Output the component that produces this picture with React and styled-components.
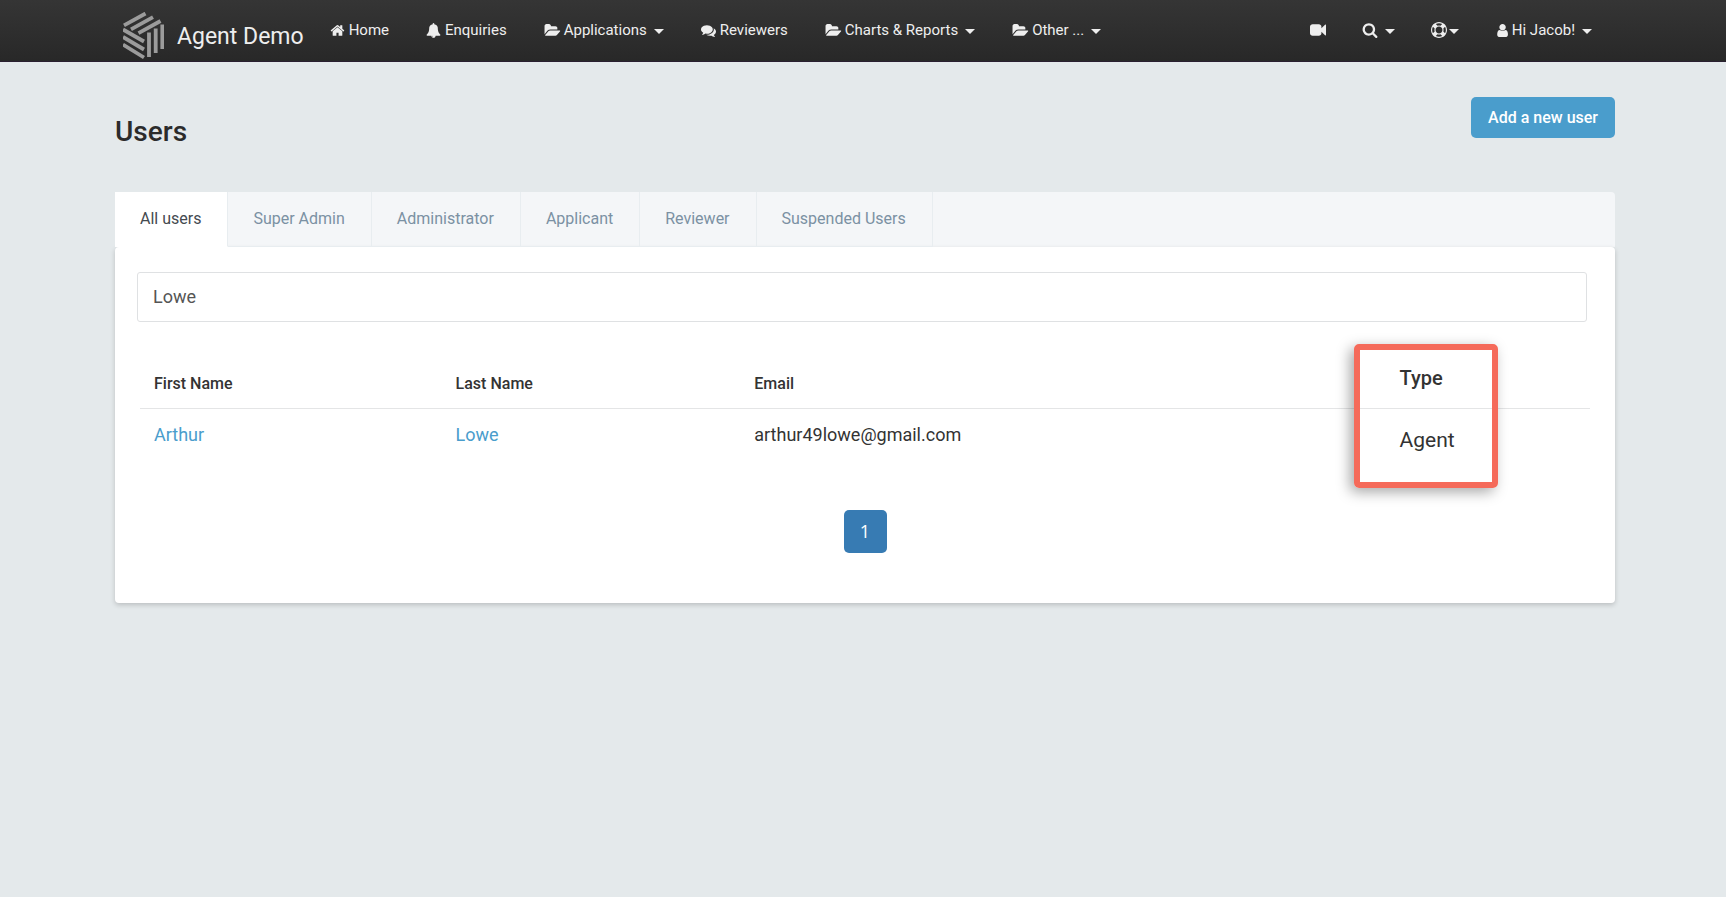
import React from "react";
import styled, { createGlobalStyle } from "styled-components";

const GlobalStyle = createGlobalStyle`
  *, *::before, *::after { box-sizing: border-box; }
  body {
    margin: 0;
    background: #e4e9eb;
    color: #333;
    font-family: Roboto, "Liberation Sans", sans-serif;
    font-size: 16px;
    line-height: 24px;
  }
`;

const ICONS = {
  home: [1792, "M1472 992v480q0 26-19 45t-45 19h-384v-384h-256v384h-384q-26 0-45-19t-19-45v-480q0-1 .5-3t.5-3l575-474 575 474q1 2 1 6zm223-69l-62 74q-8 9-21 11h-3q-13 0-21-7l-692-577-692 577q-12 8-24 7-13-2-21-11l-62-74q-8-10-7-23.5t11-21.5l719-599q32-26 76-26t76 26l244 204v-195q0-14 9-23t23-9h192q14 0 23 9t9 23v408l219 182q10 8 11 21.5t-7 23.5z"],
  bell: [1792, "M912 1696q0-16-16-16-59 0-101.5-42.5t-42.5-101.5q0-16-16-16t-16 16q0 73 51.5 124.5t124.5 51.5q16 0 16-16zm816-288q0 52-38 90t-90 38h-448q0 106-75 181t-181 75-181-75-75-181h-448q-52 0-90-38t-38-90q50-42 91-88t85-119.5 74.5-158.5 50-206 19.5-260q0-152 117-282.5t307-158.5q-8-19-8-39 0-40 28-68t68-28 68 28 28 68q0 20-8 39 190 28 307 158.5t117 282.5q0 139 19.5 260t50 206 74.5 158.5 85 119.5 91 88z"],
  folder: [1920, "M1943 952q0 31-31 66l-336 396q-43 51-120.5 86.5t-143.5 35.5h-1088q-34 0-60.5-13t-26.5-43q0-31 31-66l336-396q43-51 120.5-86.5t143.5-35.5h1088q34 0 60.5 13t26.5 43zm-343-344v160h-832q-94 0-197 47.5t-164 119.5l-337 396-5 6q0-4-.5-12.5t-.5-12.5v-960q0-92 66-158t158-66h320q92 0 158 66t66 158v32h544q92 0 158 66t66 158z"],
  comments: [1792, "M1408 768q0 139-94 257t-256.5 186.5-353.5 68.5q-86 0-176-16-124 88-278 128-36 9-86 16h-3q-11 0-20.5-8t-11.5-21q-1-3-1-6.5t.5-6.5 2-6l2.5-5 3.5-5.5 4-5 4.5-5 4-4.5q5-6 23-25t26-29.5 22.5-29 25-38.5 20.5-44q-124-72-195-177t-71-224q0-139 94-257t256.5-186.5 353.5-68.5 353.5 68.5 256.5 186.5 94 257zm384 256q0 120-71 224.5t-195 176.5q10 24 20.5 44t25 38.5 22.5 29 26 29.5 23 25q1 1 4 4.5t4.5 5 4 5 3.5 5.5l2.5 5 2 6 .5 6.5-1 6.5q-3 14-13 22t-22 7q-50-7-86-16-154-40-278-128-90 16-176 16-271 0-472-132 58 4 88 4 161 0 309-45t264-129q125-92 192-212t67-254q0-77-23-152 129 71 204 178t75 230z"],
  video: [1792, "M1792 352v1088q0 42-39 59-13 5-25 5-27 0-45-19l-403-403v166q0 119-84.5 203.5t-203.5 84.5h-704q-119 0-203.5-84.5t-84.5-203.5v-704q0-119 84.5-203.5t203.5-84.5h704q119 0 203.5 84.5t84.5 203.5v165l403-402q18-19 45-19 12 0 25 5 39 17 39 59z"],
  search: [1792, "M1216 832q0-185-131.5-316.5t-316.5-131.5-316.5 131.5-131.5 316.5 131.5 316.5 316.5 131.5 316.5-131.5 131.5-316.5zm512 832q0 52-38 90t-90 38q-54 0-90-38l-343-342q-179 124-399 124-143 0-273.5-55.5t-225-150-150-225-55.5-273.5 55.5-273.5 150-225 225-150 273.5-55.5 273.5 55.5 225 150 150 225 55.5 273.5q0 220-124 399l343 343q37 37 37 90z"],
  ring: [1792, "M896 0q182 0 348 71t286 191 191 286 71 348-71 348-191 286-286 191-348 71-348-71-286-191-191-286-71-348 71-348 191-286 286-191 348-71zm0 128q-190 0-361 90l194 194q82-28 167-28t167 28l194-194q-171-90-361-90zm-678 1129l194-194q-28-82-28-167t28-167l-194-194q-90 171-90 361t90 361zm678 407q190 0 361-90l-194-194q-82 28-167 28t-167-28l-194 194q171 90 361 90zm0-384q159 0 271.5-112.5t112.5-271.5-112.5-271.5-271.5-112.5-271.5 112.5-112.5 271.5 112.5 271.5 271.5 112.5zm484-217l194 194q90-171 90-361t-90-361l-194 194q28 82 28 167t-28 167z"],
  user: [1536, "M1536 1399q0 109-62.5 187t-150.5 78h-854q-88 0-150.5-78t-62.5-187q0-85 8.5-160.5t31.5-152 58.5-131 94-89 134.5-34.5q131 128 313 128t313-128q76 0 134.5 34.5t94 89 58.5 131 31.5 152 8.5 160.5zm-256-887q0 159-112.5 271.5t-271.5 112.5-271.5-112.5-112.5-271.5 112.5-271.5 271.5-112.5 271.5 112.5 112.5 271.5z"],
};

const IconSvg = styled.svg`
  display: block;
  flex: none;
  fill: currentColor;
  overflow: visible;
`;

function Icon({ name, size = 15 }) {
  const [w, d] = ICONS[name];
  return (
    <IconSvg width={Math.round((size * w) / 1792)} height={size} viewBox={`0 0 ${w} 1792`} aria-hidden="true">
      <path d={d} />
    </IconSvg>
  );
}

const Header = styled.header`
  display: flex;
  align-items: flex-start;
  height: 62px;
  padding: 0 134px 0 123px;
  background: linear-gradient(#353535, #282828);
  border-bottom: 1px solid #2a2030;
  color: #eee;
`;

const Brand = styled.a`
  display: flex;
  gap: 13px;
  padding-top: 12px;
  margin-right: 26px;
  color: inherit;
  font-size: 23px;
  line-height: 50px;
  text-decoration: none;
  white-space: nowrap;
`;

const Nav = styled.nav`
  display: flex;
  flex: ${(p) => (p.$grow ? 1 : "none")};
  gap: ${(p) => (p.$grow ? 37 : 36)}px;
  padding-top: 18px;
`;

const navItem = `
  display: flex;
  align-items: center;
  gap: 4px;
  padding: 0;
  border: 0;
  background: none;
  color: inherit;
  font-family: inherit;
  font-size: 15px;
  line-height: 24px;
  font-weight: 400;
  text-decoration: none;
  white-space: nowrap;
  cursor: pointer;
`;
const NavLink = styled.a`${navItem}`;
const NavButton = styled.button`${navItem}`;

const Caret = styled.span`
  margin: 3px 0 0 ${(p) => (p.$tight ? -2 : 3)}px;
  border: 5px solid transparent;
  border-top-color: currentColor;
  border-bottom: 0;
`;

const Main = styled.main`
  padding: 35px 111px 40px 115px;
`;

const TitleRow = styled.div`
  display: flex;
  justify-content: space-between;
  align-items: flex-start;
  margin-bottom: 42px;
`;

const Title = styled.h1`
  margin: 17px 0 0;
  color: #2b2b2b;
  font-size: 28px;
  line-height: 36px;
  font-weight: 500;
`;

const AddButton = styled.button`
  height: 41px;
  padding: 0 17px;
  border: 0;
  border-radius: 5px;
  background: #4a9dcc;
  color: #fff;
  font-family: inherit;
  font-size: 16px;
  font-weight: 500;
  cursor: pointer;
`;

const Tabs = styled.div`
  display: flex;
  background: #f4f6f8;
  border-radius: 0 4px 0 0;
`;

const Tab = styled.button`
  height: 55px;
  padding: 0 26px 2px 25px;
  border: 0;
  border-right: 1px solid #e8edf0;
  border-bottom: 1px solid ${(p) => (p.$active ? "#fff" : "#e8edf0")};
  background: ${(p) => (p.$active ? "#fff" : "transparent")};
  color: ${(p) => (p.$active ? "#444a50" : "#7b91a3")};
  font-family: inherit;
  font-size: 16px;
  cursor: pointer;
`;

const Card = styled.section`
  padding: 25px 25px 50px;
  border-radius: 4px;
  background: #fff;
  box-shadow: 0 2px 5px rgba(0, 0, 0, 0.18);
`;

const SearchForm = styled.form`
  margin: 0 3px 34px -3px;
`;

const SearchInput = styled.input`
  display: block;
  width: 100%;
  height: 50px;
  padding: 0 15px 2px;
  border: 1px solid #dfe1e3;
  border-radius: 3px;
  background: #fff;
  color: #555;
  font-family: inherit;
  font-size: 18px;
  outline: 0;
`;

const Table = styled.table`
  width: 100%;
  table-layout: fixed;
  border-collapse: collapse;
  text-align: left;
`;

const Col = styled.col`
  width: ${(p) => p.$width};
`;

const Th = styled.th`
  position: relative;
  height: 52px;
  padding: ${(p) => (p.$featured ? "0 14px 7px" : "4px 14px 0")};
  border-bottom: 1px solid #e4e5e6;
  font-size: ${(p) => (p.$featured ? 20 : 16)}px;
  font-weight: 500;
`;

const Td = styled.td`
  height: 52px;
  padding: ${(p) => (p.$featured ? "12px 14px 0" : "2px 14px 0")};
  font-size: ${(p) => (p.$featured ? 21 : 18)}px;
`;

const RowLink = styled.a`
  color: #4a9dcc;
  text-decoration: none;
`;

const Highlight = styled.span`
  position: absolute;
  top: -12px;
  left: -32px;
  width: 144px;
  height: 144px;
  border: 6px solid #f56a5a;
  border-radius: 5px;
  box-shadow: -4px 4px 14px rgba(0, 0, 0, 0.35);
  pointer-events: none;
`;

const Pagination = styled.nav`
  display: flex;
  justify-content: center;
  margin-top: 50px;
`;

const PageLink = styled.a`
  width: 43px;
  border-radius: 5px;
  background: #377bb3;
  color: #fff;
  font-family: "Open Sans", sans-serif;
  font-size: 18px;
  line-height: 43px;
  text-align: center;
  text-decoration: none;
`;

function Logo() {
  return (
    <svg width="41" height="48" viewBox="0 0 41 48" aria-hidden="true">
      <g stroke="#9b9b9b" strokeWidth="3.8" fill="none">
        <path d="M1 13.4 22.5 1.5M8 17.3 30 5.2M15.5 21.2 37.5 9" />
        <path d="M0 17.5 21 29.5M0 25 21 37.500M0 32.500 21 45.500" />
        <path d="M26 20.500V45M32.700 16.500V41M39.300 12.500V37" />
      </g>
    </svg>
  );
}

const MENU = [
  { label: "Home", icon: "home" },
  { label: "Enquiries", icon: "bell" },
  { label: "Applications", icon: "folder", menu: true },
  { label: "Reviewers", icon: "comments" },
  { label: "Charts & Reports", icon: "folder", menu: true },
  { label: "Other ...", icon: "folder", menu: true },
];

const TABS = ["All users", "Super Admin", "Administrator", "Applicant", "Reviewer", "Suspended Users"];

export default function App() {
  return (
    <>
      <GlobalStyle />
      <Header>
        <Brand href="#">
          <Logo />
          Agent Demo
        </Brand>
        <Nav $grow>
          {MENU.map((m) =>
            m.menu ? (
              <NavButton key={m.label} type="button">
                <Icon name={m.icon} />
                {m.label}
                <Caret />
              </NavButton>
            ) : (
              <NavLink key={m.label} href="#">
                <Icon name={m.icon} />
                {m.label}
              </NavLink>
            )
          )}
        </Nav>
        <Nav>
          <NavLink href="#" aria-label="Video"><Icon name="video" size={16} /></NavLink>
          <NavButton type="button" aria-label="Search"><Icon name="search" size={16} /><Caret /></NavButton>
          <NavButton type="button" aria-label="Help"><Icon name="ring" size={16} /><Caret $tight /></NavButton>
          <NavButton type="button"><Icon name="user" />Hi Jacob!<Caret /></NavButton>
        </Nav>
      </Header>
      <Main>
        <TitleRow>
          <Title>Users</Title>
          <AddButton type="button">Add a new user</AddButton>
        </TitleRow>
        <Tabs role="tablist">
          {TABS.map((t, i) => (
            <Tab key={t} type="button" role="tab" aria-selected={i === 0} $active={i === 0}>{t}</Tab>
          ))}
        </Tabs>
        <Card>
          <SearchForm>
            <SearchInput type="text" aria-label="Search users" defaultValue="Lowe" />
          </SearchForm>
          <Table>
            <colgroup>
              <Col $width="20.8%" />
              <Col $width="20.6%" />
              <Col $width="44.5%" />
              <Col />
            </colgroup>
            <thead>
              <tr>
                <Th scope="col">First Name</Th>
                <Th scope="col">Last Name</Th>
                <Th scope="col">Email</Th>
                <Th scope="col" $featured>Type<Highlight /></Th>
              </tr>
            </thead>
            <tbody>
              <tr>
                <Td><RowLink href="#">Arthur</RowLink></Td>
                <Td><RowLink href="#">Lowe</RowLink></Td>
                <Td>arthur49lowe@gmail.com</Td>
                <Td $featured>Agent</Td>
              </tr>
            </tbody>
          </Table>
          <Pagination aria-label="Pages">
            <PageLink href="#" aria-current="page">1</PageLink>
          </Pagination>
        </Card>
      </Main>
    </>
  );
}
